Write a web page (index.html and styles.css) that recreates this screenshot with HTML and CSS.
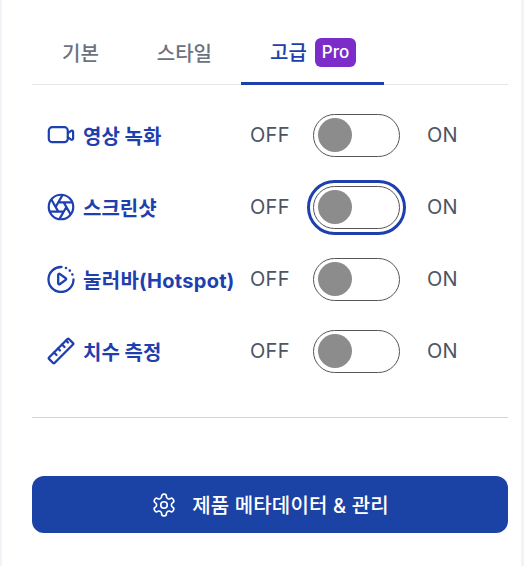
FILE: index.html
```html
<!DOCTYPE html>
<html lang="ko">
<head>
<meta charset="utf-8">
<title>고급 설정</title>
<link rel="stylesheet" href="styles.css">
</head>
<body>
<main class="panel">
  <nav class="tabs">
    <div class="tab">기본</div>
    <div class="tab">스타일</div>
    <div class="tab tab-active"><span>고급</span><span class="pro">Pro</span></div>
  </nav>
  <section class="rows">
    <div class="row">
      <div class="label">
        <svg class="icon" viewBox="0 0 28 28" fill="none" stroke="currentColor" stroke-width="2.200" stroke-linejoin="round" stroke-linecap="round"><rect x="1.800" y="6.200" width="19" height="15" rx="3.500"/><path d="M20.800 12.200l3.400-2.400c.8-.5 1.900.1 1.900 1v6.800c0 .9-1.100 1.500-1.900 1l-3.400-2.400"/></svg>
        <span>영상 녹화</span>
      </div>
      <span class="state off">OFF</span>
      <div class="toggle" role="switch" aria-checked="false"><span class="knob"></span></div>
      <span class="state on">ON</span>
    </div>
    <div class="row">
      <div class="label">
        <svg class="icon" viewBox="0 0 24 24" fill="none" stroke="currentColor" stroke-width="1.900" stroke-linejoin="round" stroke-linecap="round"><circle cx="12" cy="12" r="10.500"/><path d="m14.310 8 5.740 9.940M9.690 8h11.480M7.380 12l5.740-9.940M9.690 16 3.950 6.060M14.310 16H2.830M16.620 12l-5.740 9.940"/></svg>
        <span>스크린샷</span>
      </div>
      <span class="state off">OFF</span>
      <div class="toggle toggle-focus" role="switch" aria-checked="false"><span class="knob"></span></div>
      <span class="state on">ON</span>
    </div>
    <div class="row">
      <div class="label">
        <svg class="icon" viewBox="0 0 28 28" fill="none" stroke="currentColor" stroke-width="2.300" stroke-linejoin="round" stroke-linecap="round"><path d="M14.500 2A12.500 12.500 0 1 0 26.500 14.500"/><path d="M19 3v0M22.800 5.600v0M25.400 9.500v0" stroke-width="2.600"/><path d="M11.200 9.800c0-.8.900-1.300 1.500-.9l6 4.300c.6.400.6 1.300 0 1.700l-6 4.300c-.6.400-1.500-.1-1.500-.9z"/></svg>
        <span class="label-wide">눌러바(Hotspot)</span>
      </div>
      <span class="state off">OFF</span>
      <div class="toggle" role="switch" aria-checked="false"><span class="knob"></span></div>
      <span class="state on">ON</span>
    </div>
    <div class="row">
      <div class="label">
        <svg class="icon" viewBox="0 0 28 28" fill="none" stroke="currentColor" stroke-width="2.300" stroke-linejoin="round" stroke-linecap="round"><path d="M2 20.500 20.500 2c.4-.4 1-.4 1.400 0l4.100 4.100c.4.400.4 1 0 1.400L7.500 26c-.4.400-1 .4-1.400 0L2 21.900c-.4-.4-.4-1 0-1.400z"/><path d="M7 15.500l2.500 2.500M11 11.500l2 2M15 7.500l2.500 2.500M19 3.500l2 2"/></svg>
        <span>치수 측정</span>
      </div>
      <span class="state off">OFF</span>
      <div class="toggle" role="switch" aria-checked="false"><span class="knob"></span></div>
      <span class="state on">ON</span>
    </div>
  </section>
  <hr class="divider">
  <button class="action" type="button">
    <svg class="gear" viewBox="0 0 24 24" fill="none" stroke="currentColor" stroke-width="1.500" stroke-linejoin="round" stroke-linecap="round"><path d="M12.220 2h-.44a2 2 0 0 0-2 2v.18a2 2 0 0 1-1 1.730l-.43.25a2 2 0 0 1-2 0l-.15-.08a2 2 0 0 0-2.730.73l-.22.38a2 2 0 0 0 .73 2.730l.15.1a2 2 0 0 1 1 1.720v.51a2 2 0 0 1-1 1.740l-.15.09a2 2 0 0 0-.73 2.730l.22.38a2 2 0 0 0 2.730.73l.15-.08a2 2 0 0 1 2 0l.43.25a2 2 0 0 1 1 1.730V20a2 2 0 0 0 2 2h.44a2 2 0 0 0 2-2v-.18a2 2 0 0 1 1-1.730l.43-.25a2 2 0 0 1 2 0l.15.08a2 2 0 0 0 2.730-.73l.22-.39a2 2 0 0 0-.73-2.730l-.15-.08a2 2 0 0 1-1-1.740v-.5a2 2 0 0 1 1-1.740l.15-.09a2 2 0 0 0 .73-2.730l-.22-.38a2 2 0 0 0-2.730-.73l-.15.08a2 2 0 0 1-2 0l-.43-.25a2 2 0 0 1-1-1.730V4a2 2 0 0 0-2-2z"/><circle cx="12" cy="12" r="3"/></svg>
    <span class="action-text">제품 메타데이터 &amp; 관리</span>
  </button>
</main>
</body>
</html>
```
FILE: styles.css
```css
* { box-sizing: border-box; }
html, body { height: 100%; }
body {
  margin: 0;
  background: #f1f3f8;
  font-family: Inter, "Noto Sans CJK KR", "Liberation Sans", sans-serif;
  font-size: 20px;
  overflow: hidden;
}
.panel {
  width: 519px;
  height: 566px;
  margin-left: 2px;
  padding: 30px 13px 0 30px;
  background: #fff;
}
.tabs {
  display: flex;
  height: 55px;
  padding-left: 1px;
  border-bottom: 1px solid #e5e7eb;
}
.tab {
  display: flex;
  align-items: center;
  height: 55px;
  padding: 0 29px 7px;
  color: #6b7280;
  font-weight: 500;
  line-height: 1;
}
.tab-active {
  gap: 8px;
  padding: 0 28px 7px 29px;
  color: #1e40af;
  border-bottom: 3px solid #1e40af;
}
.pro {
  display: flex;
  align-items: center;
  height: 29px;
  padding: 0 7px;
  border-radius: 6px;
  background: #7b2cc9;
  color: #fff;
  font-size: 17px;
}
.rows {
  display: flex;
  flex-direction: column;
  padding-top: 14px;
}
.row {
  display: flex;
  align-items: center;
  height: 72px;
  padding-left: 15px;
}
.label {
  display: flex;
  align-items: center;
  gap: 8px;
  width: 203px;
  color: #1e40af;
  font-weight: 700;
  white-space: nowrap;
}
.label-wide { letter-spacing: 0.3px; }
.icon { width: 28px; height: 28px; flex: none; }
.state { color: #4b5563; font-size: 20px; line-height: 1; letter-spacing: 0.3px; }
.off { width: 63px; }
.on { margin-left: 27px; }
.toggle {
  display: flex;
  align-items: center;
  width: 87px;
  height: 43px;
  padding-left: 4px;
  border: 1px solid #555;
  border-radius: 22px;
  background: #fff;
}
.toggle-focus {
  outline: 3px solid #1e40af;
  outline-offset: 3px;
}
.knob {
  width: 34px;
  height: 34px;
  border-radius: 50%;
  background: #8c8c8c;
}
.divider {
  height: 1px;
  margin: 30px 0 0;
  border: 0;
  background: #d4d4d4;
}
.action {
  display: flex;
  align-items: center;
  justify-content: center;
  gap: 15px;
  width: 476px;
  height: 57px;
  margin-top: 58px;
  border: 0;
  border-radius: 12px;
  background: #1b43a6;
  color: #fff;
  font: 500 20px Inter, "Noto Sans CJK KR", sans-serif;
}
.action-text { letter-spacing: 0.15px; }
.gear { width: 26px; height: 26px; flex: none; }
```
